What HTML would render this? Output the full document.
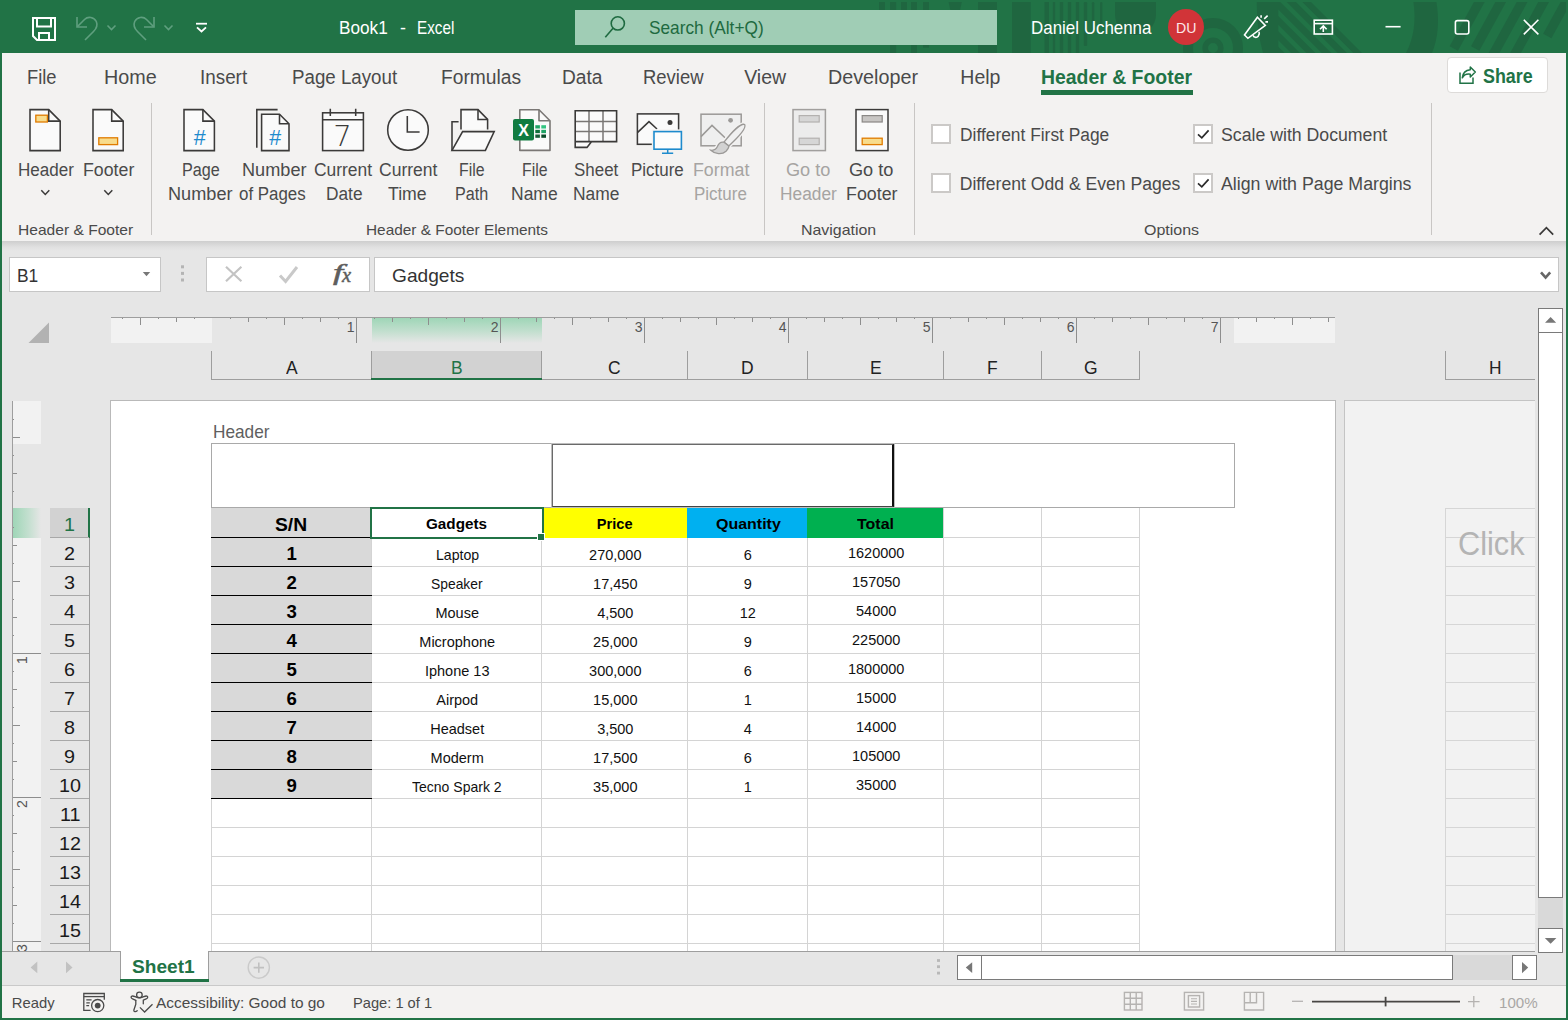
<!DOCTYPE html>
<html lang="en"><head><meta charset="utf-8"><title>Book1 - Excel</title>
<style>
html,body{margin:0;padding:0}
body{width:1568px;height:1020px;position:relative;overflow:hidden;background:#e6e6e6;font-family:"Liberation Sans",sans-serif;}
.a{position:absolute;display:block}
.t{position:absolute;white-space:nowrap;line-height:1;transform-origin:0 0;display:block}
</style></head>
<body>
<div class="a" style="left:0px;top:0px;width:1568px;height:53px;background:#217346;"></div>
<svg class="a" style="left:0;top:0" width="1568" height="53" viewBox="0 0 1568 53"><defs><clipPath id="cpA"><rect x="1278.3" y="2" width="120" height="51"/></clipPath><clipPath id="cpB"><rect x="1440" y="2" width="126" height="51"/></clipPath></defs><g fill="#1f6640"><rect x="879" y="2" width="6" height="40"/><rect x="890" y="2" width="6.2" height="51"/><rect x="901" y="2" width="6" height="40"/><rect x="911" y="2" width="6" height="51"/><rect x="923" y="2" width="6" height="45.6"/><path d="M948.6 2h13.2l-3 14h-7.2z"/><rect x="978" y="2" width="19" height="51"/><rect x="1012" y="2" width="18.7" height="51"/><rect x="1044.5" y="2" width="4.5" height="51" rx="0"/><rect x="1052.8" y="2" width="2.4" height="51" rx="0"/><rect x="1059.8" y="2" width="3.4" height="51" rx="0"/><rect x="1067.8" y="2" width="3.4" height="51" rx="0"/><rect x="1075.8" y="2" width="3.4" height="51" rx="0"/><rect x="1083.8" y="2" width="3.4" height="44" rx="1.2"/><rect x="1091.9" y="2" width="2.4" height="30" rx="1.2"/><rect x="1100" y="2" width="2.4" height="24" rx="1.2"/><path d="M1115 2h41v12.5a20.5 20.5 0 0 1-41 0z"/></g><circle cx="1213" cy="48" r="25" fill="none" stroke="#1f6640" stroke-width="10"/><circle cx="1213" cy="48" r="7.8" fill="none" stroke="#1f6640" stroke-width="5.6"/><path d="M1256.8 2H1311L1362 53H1263C1258.5 37 1256.6 20 1256.8 2Z" fill="#1f6640"/><g stroke="#217346" stroke-width="4.6" clip-path="url(#cpA)"><path d="M1293.1 -4L1357.1 60"/><path d="M1277.5 -4L1341.5 60"/><path d="M1261.6 -4L1325.6 60"/><path d="M1246.2 -4L1310.2 60"/><path d="M1230.8 -4L1294.8 60"/></g><path d="M1413.4 2H1436.4C1439.4 20 1438.4 38 1432 53H1406C1414 38 1416.2 20 1413.4 2Z" fill="#1f6640"/><g stroke="#1f6640" stroke-width="9.4" clip-path="url(#cpB)"><path d="M1482.6 -4L1453.8 48.4"/><path d="M1504.0 -4L1475.2 48.4"/><path d="M1525.4 -4L1490.2 60"/><path d="M1546.9 -4L1511.7 60"/><path d="M1569.3 -4L1547.3 36"/></g></svg>
<div class="a" style="left:575px;top:10px;width:422px;height:35px;background:#a0cdb5;"></div>
<div class="a" style="left:1168px;top:9px;width:36px;height:36px;background:#d13438;border-radius:50%;"></div>
<svg class="a" style="left:0;top:0" width="1568" height="53" viewBox="0 0 1568 53" fill="none" stroke-linecap="butt"><g stroke="#fff" stroke-width="2"><path d="M33 18H55V40H37L33 36Z"/><path d="M37 18V26.5H51V18"/><path d="M39 40V33H49V40"/></g><g stroke="#5f9f7f" stroke-width="1.6"><path d="M77 17V27H87"/><path d="M77.5 26.5L84.5 19.5C88 16 94 17 96.3 21.5C98 25.5 96.5 28.5 93.5 31.5L85 40"/><path d="M107.5 25.5L111.5 29.5L115.5 25.5"/><path d="M154 17V27H144"/><path d="M153.5 26.5L146.5 19.5C143 16 137 17 134.7 21.5C133 25.5 134.5 28.5 137.5 31.5L146 40"/><path d="M164.5 25.5L168.5 29.5L172.5 25.5"/></g><g stroke="#fff" stroke-width="1.8"><path d="M196 23.7H207"/><path d="M197 27.3L201.5 31.5L206 27.3"/></g><g stroke="#1e6a40" stroke-width="1.6"><circle cx="617.8" cy="23.4" r="6.6"/><path d="M613 28.3L605.3 37.3"/></g><g stroke="#fff" stroke-width="1.6" stroke-linejoin="miter"><path d="M1257.4 17.2L1265.3 25.5L1247.9 38.3L1244.5 35Z"/><path d="M1253 35.2C1253.6 37.6 1256.6 38 1258.2 36.2C1259.4 34.8 1259.6 33.2 1259 31.8"/><path d="M1261.1 15.2V17.8M1264.2 18.8L1267.6 15.6M1265.4 21.9H1268"/></g><g stroke="#fff" stroke-width="1.6"><rect x="1314.2" y="20.2" width="18.2" height="13.8"/><path d="M1314 23.6H1332.6"/><path d="M1323.3 32V26.3M1320 29.3L1323.3 26L1326.6 29.3"/></g><path d="M1385.5 26.7H1400.6" stroke="#fff" stroke-width="1.6"/><rect x="1455.4" y="20.6" width="13.4" height="13.4" rx="2" stroke="#fff" stroke-width="1.6"/><path d="M1523.8 19.8L1538.4 34.4M1538.4 19.8L1523.8 34.4" stroke="#fff" stroke-width="1.6"/></svg>
<span class="t" style="left:339.10px;top:19.00px;font-size:18.2px;color:#fff;transform:scaleX(0.9458);">Book1</span>
<span class="t" style="left:400.00px;top:19.00px;font-size:18.2px;color:#fff;transform:scaleX(0.9841);">-</span>
<span class="t" style="left:417.20px;top:19.00px;font-size:18.2px;color:#fff;transform:scaleX(0.8382);">Excel</span>
<span class="t" style="left:649.00px;top:19.00px;font-size:18.2px;color:#1e6a40;transform:scaleX(0.9491);">Search (Alt+Q)</span>
<span class="t" style="left:1030.70px;top:19.00px;font-size:18.2px;color:#fff;transform:scaleX(0.9307);">Daniel Uchenna</span>
<span class="t" style="left:1175.60px;top:21.00px;font-size:14px;color:#fde7e9;transform:scaleX(1.0084);">DU</span>
<div class="a" style="left:0px;top:53px;width:1568px;height:188px;background:#f3f2f1;"></div>
<span class="t" style="left:27.10px;top:68.00px;font-size:19.5px;color:#4a4a4a;transform:scaleX(0.9396);">File</span>
<span class="t" style="left:104.10px;top:68.00px;font-size:19.5px;color:#4a4a4a;transform:scaleX(1.0141);">Home</span>
<span class="t" style="left:200.30px;top:68.00px;font-size:19.5px;color:#4a4a4a;transform:scaleX(0.9662);">Insert</span>
<span class="t" style="left:292.30px;top:68.00px;font-size:19.5px;color:#4a4a4a;transform:scaleX(0.9599);">Page Layout</span>
<span class="t" style="left:441.10px;top:68.00px;font-size:19.5px;color:#4a4a4a;transform:scaleX(0.9851);">Formulas</span>
<span class="t" style="left:562.30px;top:68.00px;font-size:19.5px;color:#4a4a4a;transform:scaleX(0.9820);">Data</span>
<span class="t" style="left:643.10px;top:68.00px;font-size:19.5px;color:#4a4a4a;transform:scaleX(0.9459);">Review</span>
<span class="t" style="left:744.20px;top:68.00px;font-size:19.5px;color:#4a4a4a;">View</span>
<span class="t" style="left:828.10px;top:68.00px;font-size:19.5px;color:#4a4a4a;transform:scaleX(1.0121);">Developer</span>
<span class="t" style="left:960.30px;top:68.00px;font-size:19.5px;color:#4a4a4a;">Help</span>
<span class="t" style="left:1041.30px;top:68.00px;font-size:19.5px;color:#217346;font-weight:700;transform:scaleX(0.9953);">Header &amp; Footer</span>
<div class="a" style="left:1041px;top:90px;width:152px;height:5px;background:#217346;"></div>
<div class="a" style="left:1447px;top:57px;width:101px;height:36px;background:#fff;border:1px solid #dddbd9;border-radius:4px;box-sizing:border-box;"></div>
<svg class="a" style="left:1455px;top:62px" width="26" height="26" viewBox="1455 62 26 26" fill="none" stroke="#217346" stroke-width="1.5"><path d="M1460 72.5V83.3H1473V77.5"/><path d="M1470.3 67L1475.3 72L1470.3 77V74.2C1466.5 73.6 1463.8 75 1462.3 77.8C1462.8 73 1465.5 70.3 1470.3 69.8Z" stroke-linejoin="round"/></svg>
<span class="t" style="left:1483.30px;top:67.00px;font-size:19.5px;color:#217346;font-weight:700;transform:scaleX(0.9168);">Share</span>
<div class="a" style="left:151px;top:103px;width:1px;height:132px;background:#c8c6c4;"></div>
<div class="a" style="left:764px;top:103px;width:1px;height:132px;background:#c8c6c4;"></div>
<div class="a" style="left:914px;top:103px;width:1px;height:132px;background:#c8c6c4;"></div>
<div class="a" style="left:1431px;top:103px;width:1px;height:132px;background:#c8c6c4;"></div>
<div class="a" style="left:931px;top:124px;width:20px;height:20px;background:#fff;border:2px solid #cbc9c7;box-sizing:border-box;"></div>
<div class="a" style="left:931px;top:173px;width:20px;height:20px;background:#fff;border:2px solid #cbc9c7;box-sizing:border-box;"></div>
<div class="a" style="left:1193px;top:124px;width:20px;height:20px;background:#fff;border:2px solid #cbc9c7;box-sizing:border-box;"></div>
<div class="a" style="left:1193px;top:173px;width:20px;height:20px;background:#fff;border:2px solid #cbc9c7;box-sizing:border-box;"></div>
<svg class="a" style="left:0;top:100px" width="1568" height="141" viewBox="0 100 1568 141" fill="none" stroke-width="1.55"><path d="M30 109.6H48.7L60.2 121.1V150.6H30Z" fill="#fafafa" stroke="#3b3a39"/><path d="M48.7 109.6V121.1H60.2" stroke="#3b3a39"/><rect x="35.8" y="115.2" width="11.6" height="6.8" fill="#f8dc8c" stroke="#e07b00" stroke-width="1.3"/><path d="M93 109.6H111.7L123.2 121.1V150.6H93Z" fill="#fafafa" stroke="#3b3a39"/><path d="M111.7 109.6V121.1H123.2" stroke="#3b3a39"/><rect x="98.8" y="137.8" width="18.8" height="6.8" fill="#f8dc8c" stroke="#e07b00" stroke-width="1.3"/><g stroke="#3b3a39" stroke-width="1.5"><path d="M41.3 190.3L45.3 194.5L49.3 190.3"/><path d="M104.3 190.3L108.3 194.5L112.3 190.3"/></g><path d="M184 109.6H202.9L214.4 121.1V150.6H184Z" fill="#fafafa" stroke="#3b3a39"/><path d="M202.9 109.6V121.1H214.4" stroke="#3b3a39"/><text x="199.8" y="144.9" font-size="21.5" font-weight="400" fill="#1e8bcd" text-anchor="middle" stroke="none" font-family="Liberation Sans,sans-serif">#</text><path d="M256.8 147.8V109.6H277.6" stroke="#3b3a39"/><path d="M261.6 114.2H279.5L289 123.7V150.6H261.6Z" fill="#fafafa" stroke="#3b3a39"/><path d="M279.5 114.2V123.7H289" stroke="#3b3a39"/><text x="275.3" y="144.9" font-size="21.5" font-weight="400" fill="#1e8bcd" text-anchor="middle" stroke="none" font-family="Liberation Sans,sans-serif">#</text><rect x="322.6" y="112.8" width="40.8" height="37.8" fill="#fafafa" stroke="#3b3a39"/><path d="M322.6 119.7H363.4M330.3 108.8V116M355.7 108.8V116" stroke="#3b3a39"/><text x="342.5" y="146.3" font-size="29" fill="#3b3a39" text-anchor="middle" stroke="none" font-family="DejaVu Sans Light,DejaVu Sans,sans-serif" font-weight="200">7</text><circle cx="408" cy="130" r="20.3" fill="#fafafa" stroke="#3b3a39"/><path d="M407.3 116V132H419.6" stroke="#3b3a39"/><path d="M461 129.6V109.6H478L487.6 119.4V129.6" fill="#fafafa" stroke="#3b3a39"/><path d="M478 109.6V119.4H487.6" stroke="#3b3a39"/><path d="M458.6 121.8H452V150.4" stroke="#3b3a39"/><path d="M452 150.4L462.6 131.6H494.2L485.4 150.4Z" fill="#fafafa" stroke="#3b3a39"/><path d="M519.8 109.8H539L550 120.8V150.4H519.8Z" fill="#fafafa" stroke="#7a7775" stroke-width="1.6" stroke-linejoin="round"/><path d="M539 109.8V120.8H550" stroke="#7a7775" stroke-width="1.6" stroke-linejoin="round"/><rect x="513" y="119" width="21" height="21.5" rx="2" fill="#107c41"/><text x="523.5" y="135.6" font-size="16" font-weight="700" fill="#fff" text-anchor="middle" font-family="Liberation Sans,sans-serif">X</text><rect x="535.3" y="125.20" width="4.6" height="3.3" fill="#21a366"/><rect x="541.3" y="125.20" width="4.7" height="3.3" fill="#33c481"/><rect x="535.3" y="129.85" width="4.6" height="3.3" fill="#0e703b"/><rect x="541.3" y="129.85" width="4.7" height="3.3" fill="#21a366"/><rect x="535.3" y="134.50" width="4.6" height="3.3" fill="#185c37"/><rect x="541.3" y="134.50" width="4.7" height="3.3" fill="#0a4a28"/><path d="M575.2 110.8H616.6V141.6H591.6L587 147.4H575.2Z" fill="#fafafa"/><path d="M589 110.8V141.6M603 110.8V141.6M575.2 121.6H616.6M575.2 131.6H616.6" stroke="#7a7775" stroke-width="1.5"/><path d="M575.2 110.8H616.6V141.6H591.6L587 147.4H575.2ZM575.2 141.6H591.6" stroke="#3b3a39" stroke-width="1.6"/><rect x="637.4" y="113.9" width="41.2" height="30.4" fill="#fafafa" stroke="#3b3a39"/><path d="M637.4 132.6L649 121.6L657 129" stroke="#3b3a39"/><circle cx="670" cy="122.5" r="2.5" fill="#3b3a39"/><rect x="654" y="131.6" width="27.4" height="17.6" fill="none" stroke="#f3f2f1" stroke-width="4.4"/><rect x="654" y="131.6" width="27.4" height="17.6" fill="#fdfdfd" stroke="#1e8bcd" stroke-width="1.6"/><path d="M667.7 149.2V153.2M662 153.3H673.2" stroke="#1e8bcd" stroke-width="1.5"/><rect x="701" y="114.2" width="40.2" height="31.6" fill="#efefef" stroke="#9b9997" stroke-width="1.5"/><path d="M701 136.6L712 125.4L725 137.8" stroke="#9b9997" stroke-width="1.5"/><circle cx="730.6" cy="120.3" r="2.4" fill="#9b9997"/><path d="M744.7 124.5C741.5 123 733 130.5 724 142.2L728.8 145.9C738 137.5 746.5 128 744.7 124.5Z" stroke="#f3f2f1" stroke-width="4.2"/><path d="M724 142.2C720.4 141.4 718.4 144 717.4 146.6C716.2 149.4 713.8 150.6 710.8 150.2C715 154.2 722 155 726 151.2C728 149.2 729 147.6 728.8 145.9Z" stroke="#f3f2f1" stroke-width="4.2"/><path d="M744.7 124.5C741.5 123 733 130.5 724 142.2L728.8 145.9C738 137.5 746.5 128 744.7 124.5Z" fill="#f0f0f0" stroke="#9b9997" stroke-width="1.3"/><path d="M724 142.2C720.4 141.4 718.4 144 717.4 146.6C716.2 149.4 713.8 150.6 710.8 150.2C715 154.2 722 155 726 151.2C728 149.2 729 147.6 728.8 145.9Z" fill="#d2d2d2" stroke="#9b9997" stroke-width="1.3"/><rect x="793" y="109.6" width="32.4" height="41" fill="#ececec" stroke="#a19f9d" stroke-width="1.5"/><rect x="799.2" y="115.6" width="20" height="6.4" fill="#d6d6d6" stroke="#b3b1af" stroke-width="1.2"/><rect x="799.2" y="138.2" width="20" height="6.4" fill="#d6d6d6" stroke="#b3b1af" stroke-width="1.2"/><rect x="856" y="109.6" width="32" height="41" fill="#fafafa" stroke="#3b3a39" stroke-width="1.5"/><rect x="862.2" y="115.6" width="20" height="6.4" fill="#c8c6c4" stroke="#8a8886" stroke-width="1.2"/><rect x="862.2" y="138.2" width="20" height="6.4" fill="#f8dc8c" stroke="#e07b00" stroke-width="1.3"/><path d="M1198 134.4L1201.8 137.8L1208.6 130.4" stroke="#2b2b2b" stroke-width="1.7"/><path d="M1198 183.4L1201.8 186.8L1208.6 179.4" stroke="#2b2b2b" stroke-width="1.7"/><path d="M1539.6 234.6L1546.4 227.6L1553.2 234.6" stroke="#3b3a39" stroke-width="1.7"/></svg>
<span class="t" style="left:17.50px;top:162.00px;font-size:17.6px;color:#4a4a4a;transform:scaleX(0.9701);">Header</span>
<span class="t" style="left:83.30px;top:162.00px;font-size:17.6px;color:#4a4a4a;transform:scaleX(1.0086);">Footer</span>
<span class="t" style="left:181.50px;top:162.00px;font-size:17.6px;color:#4a4a4a;transform:scaleX(0.9198);">Page</span>
<span class="t" style="left:167.50px;top:186.00px;font-size:17.6px;color:#4a4a4a;transform:scaleX(1.0309);">Number</span>
<span class="t" style="left:241.50px;top:162.00px;font-size:17.6px;color:#4a4a4a;transform:scaleX(1.0309);">Number</span>
<span class="t" style="left:239.30px;top:186.00px;font-size:17.6px;color:#4a4a4a;transform:scaleX(0.9607);">of Pages</span>
<span class="t" style="left:313.90px;top:162.00px;font-size:17.6px;color:#4a4a4a;transform:scaleX(0.9898);">Current</span>
<span class="t" style="left:325.50px;top:186.00px;font-size:17.6px;color:#4a4a4a;transform:scaleX(0.9829);">Date</span>
<span class="t" style="left:378.60px;top:162.00px;font-size:17.6px;color:#4a4a4a;transform:scaleX(0.9950);">Current</span>
<span class="t" style="left:388.30px;top:186.00px;font-size:17.6px;color:#4a4a4a;transform:scaleX(1.0063);">Time</span>
<span class="t" style="left:459.30px;top:162.00px;font-size:17.6px;color:#4a4a4a;transform:scaleX(0.9034);">File</span>
<span class="t" style="left:455.30px;top:186.00px;font-size:17.6px;color:#4a4a4a;transform:scaleX(0.9179);">Path</span>
<span class="t" style="left:521.50px;top:162.00px;font-size:17.6px;color:#4a4a4a;transform:scaleX(0.8999);">File</span>
<span class="t" style="left:510.50px;top:186.00px;font-size:17.6px;color:#4a4a4a;transform:scaleX(0.9938);">Name</span>
<span class="t" style="left:573.70px;top:162.00px;font-size:17.6px;color:#4a4a4a;transform:scaleX(0.9625);">Sheet</span>
<span class="t" style="left:572.50px;top:186.00px;font-size:17.6px;color:#4a4a4a;transform:scaleX(0.9895);">Name</span>
<span class="t" style="left:631.30px;top:162.00px;font-size:17.6px;color:#4a4a4a;transform:scaleX(0.9628);">Picture</span>
<span class="t" style="left:692.50px;top:162.00px;font-size:17.6px;color:#a6a4a2;transform:scaleX(1.0107);">Format</span>
<span class="t" style="left:694.20px;top:186.00px;font-size:17.6px;color:#a6a4a2;transform:scaleX(0.9646);">Picture</span>
<span class="t" style="left:785.60px;top:162.00px;font-size:17.6px;color:#a6a4a2;transform:scaleX(1.0318);">Go to</span>
<span class="t" style="left:780.20px;top:186.00px;font-size:17.6px;color:#a6a4a2;transform:scaleX(0.9839);">Header</span>
<span class="t" style="left:848.60px;top:162.00px;font-size:17.6px;color:#4a4a4a;transform:scaleX(1.0318);">Go to</span>
<span class="t" style="left:846.30px;top:186.00px;font-size:17.6px;color:#4a4a4a;transform:scaleX(1.0125);">Footer</span>
<span class="t" style="left:17.80px;top:223.00px;font-size:14.8px;color:#4a4a4a;transform:scaleX(1.0526);">Header &amp; Footer</span>
<span class="t" style="left:366.30px;top:223.00px;font-size:14.8px;color:#4a4a4a;transform:scaleX(1.0392);">Header &amp; Footer Elements</span>
<span class="t" style="left:801.30px;top:223.00px;font-size:14.8px;color:#4a4a4a;transform:scaleX(1.0754);">Navigation</span>
<span class="t" style="left:1144.30px;top:223.00px;font-size:14.8px;color:#4a4a4a;transform:scaleX(1.0807);">Options</span>
<span class="t" style="left:959.70px;top:127.00px;font-size:17.6px;color:#4a4a4a;transform:scaleX(0.9870);">Different First Page</span>
<span class="t" style="left:959.70px;top:176.00px;font-size:17.6px;color:#4a4a4a;">Different Odd &amp; Even Pages</span>
<span class="t" style="left:1220.70px;top:127.00px;font-size:17.6px;color:#4a4a4a;transform:scaleX(1.0057);">Scale with Document</span>
<span class="t" style="left:1220.70px;top:176.00px;font-size:17.6px;color:#4a4a4a;transform:scaleX(1.0093);">Align with Page Margins</span>
<div class="a" style="left:0px;top:241px;width:1568px;height:10px;background:linear-gradient(#cecece,#e0e0e0 60%,#e6e6e6);"></div>
<div class="a" style="left:9px;top:257px;width:152px;height:35px;background:#fff;border:1px solid #c6c6c6;box-sizing:border-box;"></div>
<div class="a" style="left:206px;top:257px;width:164px;height:35px;background:#fff;border:1px solid #c6c6c6;box-sizing:border-box;"></div>
<div class="a" style="left:374px;top:257px;width:1185px;height:35px;background:#fff;border:1px solid #c6c6c6;box-sizing:border-box;"></div>
<span class="t" style="left:16.70px;top:266.00px;font-size:19px;color:#333;transform:scaleX(0.9151);">B1</span>
<span class="t" style="left:391.50px;top:266.00px;font-size:19px;color:#333;transform:scaleX(1.0081);">Gadgets</span>
<span class="t" style="left:332.60px;top:261.00px;font-size:23px;color:#5e5e5e;font-family:'Liberation Serif',serif;font-style:italic;transform:scaleX(1.5850);-webkit-text-stroke:0.5px #5e5e5e;">f</span>
<span class="t" style="left:341.81px;top:265.00px;font-size:21px;color:#5e5e5e;font-family:'Liberation Serif',serif;font-style:italic;transform:scaleX(0.9731);-webkit-text-stroke:0.5px #5e5e5e;">x</span>
<svg class="a" style="left:0;top:255px" width="1568" height="40" viewBox="0 255 1568 40" fill="none"><path d="M142.8 272H150.2L146.5 276.2Z" fill="#777"/><rect x="181" y="265.3" width="3" height="3" fill="#b4b4b4"/><rect x="181" y="271.9" width="3" height="3" fill="#b4b4b4"/><rect x="181" y="278.5" width="3" height="3" fill="#b4b4b4"/><path d="M226 266.8L241.4 281.2M241.4 266.8L226 281.2" stroke="#c3c3c3" stroke-width="2.2"/><path d="M280 275.4L285.6 281.4L297 267" stroke="#c9c9c9" stroke-width="3"/><path d="M1541 272.3L1545.6 277.6L1550.2 272.3" stroke="#666" stroke-width="2.6"/></svg>
<div class="a" style="left:110px;top:400px;width:1226px;height:552px;background:#fff;border:1px solid #b9b9b9;border-bottom:none;box-sizing:border-box;"></div>
<div class="a" style="left:1344px;top:400px;width:191px;height:552px;background:#f2f2f2;border:1px solid #c4c4c4;border-right:none;border-bottom:none;box-sizing:border-box;"></div>
<span class="t" style="left:213.30px;top:424.00px;font-size:17.8px;color:#5f5f5f;transform:scaleX(0.9694);">Header</span>
<div class="a" style="left:211px;top:443px;width:1024px;height:65px;background:#fff;border:1px solid #a9a9a9;box-sizing:border-box;"></div>
<div class="a" style="left:551px;top:443px;width:344px;height:65px;background:#fff;border:1px solid #bdbdbd;box-sizing:border-box;"></div>
<div class="a" style="left:552px;top:444px;width:342px;height:63px;background:#fff;border-top:1px solid #6a6a6a;border-left:1.5px solid #6a6a6a;border-right:2px solid #111;border-bottom:1.5px solid #444;box-sizing:border-box;"></div>
<div class="a" style="left:211px;top:508px;width:161px;height:290px;background:#d9d9d9;"></div>
<div class="a" style="left:542px;top:508px;width:145px;height:30px;background:#ffff00;"></div>
<div class="a" style="left:687px;top:508px;width:120px;height:30px;background:#00b0f0;"></div>
<div class="a" style="left:807px;top:508px;width:137px;height:30px;background:#00b050;"></div>
<div class="a" style="left:211px;top:798px;width:1px;height:153px;background:#d4d4d4;"></div>
<div class="a" style="left:371px;top:538px;width:1px;height:413px;background:#d4d4d4;"></div>
<div class="a" style="left:541px;top:538px;width:1px;height:413px;background:#d4d4d4;"></div>
<div class="a" style="left:687px;top:538px;width:1px;height:413px;background:#d4d4d4;"></div>
<div class="a" style="left:807px;top:538px;width:1px;height:413px;background:#d4d4d4;"></div>
<div class="a" style="left:943px;top:508px;width:1px;height:443px;background:#d4d4d4;"></div>
<div class="a" style="left:1041px;top:508px;width:1px;height:443px;background:#d4d4d4;"></div>
<div class="a" style="left:1139px;top:508px;width:1px;height:443px;background:#d4d4d4;"></div>
<div class="a" style="left:944px;top:537px;width:196px;height:1px;background:#d4d4d4;"></div>
<div class="a" style="left:372px;top:566px;width:768px;height:1px;background:#d4d4d4;"></div>
<div class="a" style="left:372px;top:595px;width:768px;height:1px;background:#d4d4d4;"></div>
<div class="a" style="left:372px;top:624px;width:768px;height:1px;background:#d4d4d4;"></div>
<div class="a" style="left:372px;top:653px;width:768px;height:1px;background:#d4d4d4;"></div>
<div class="a" style="left:372px;top:682px;width:768px;height:1px;background:#d4d4d4;"></div>
<div class="a" style="left:372px;top:711px;width:768px;height:1px;background:#d4d4d4;"></div>
<div class="a" style="left:372px;top:740px;width:768px;height:1px;background:#d4d4d4;"></div>
<div class="a" style="left:372px;top:769px;width:768px;height:1px;background:#d4d4d4;"></div>
<div class="a" style="left:372px;top:798px;width:768px;height:1px;background:#d4d4d4;"></div>
<div class="a" style="left:211px;top:827px;width:929px;height:1px;background:#d4d4d4;"></div>
<div class="a" style="left:211px;top:856px;width:929px;height:1px;background:#d4d4d4;"></div>
<div class="a" style="left:211px;top:885px;width:929px;height:1px;background:#d4d4d4;"></div>
<div class="a" style="left:211px;top:914px;width:929px;height:1px;background:#d4d4d4;"></div>
<div class="a" style="left:211px;top:943px;width:929px;height:1px;background:#d4d4d4;"></div>
<div class="a" style="left:211px;top:537px;width:161px;height:1px;background:#000;"></div>
<div class="a" style="left:211px;top:566px;width:161px;height:1px;background:#000;"></div>
<div class="a" style="left:211px;top:595px;width:161px;height:1px;background:#000;"></div>
<div class="a" style="left:211px;top:624px;width:161px;height:1px;background:#000;"></div>
<div class="a" style="left:211px;top:653px;width:161px;height:1px;background:#000;"></div>
<div class="a" style="left:211px;top:682px;width:161px;height:1px;background:#000;"></div>
<div class="a" style="left:211px;top:711px;width:161px;height:1px;background:#000;"></div>
<div class="a" style="left:211px;top:740px;width:161px;height:1px;background:#000;"></div>
<div class="a" style="left:211px;top:769px;width:161px;height:1px;background:#000;"></div>
<div class="a" style="left:211px;top:798px;width:161px;height:1px;background:#000;"></div>
<div class="a" style="left:370px;top:507px;width:174px;height:32px;border:2px solid #217346;box-sizing:border-box;background:#fff;"></div>
<div class="a" style="left:537px;top:533px;width:8px;height:8px;background:#fff;"></div>
<div class="a" style="left:538px;top:534px;width:6px;height:6px;background:#217346;"></div>
<div class="a" style="left:1445px;top:508px;width:1px;height:443px;background:#d6d6d6;"></div>
<div class="a" style="left:1445px;top:508px;width:90px;height:1px;background:#d6d6d6;"></div>
<div class="a" style="left:1445px;top:537px;width:90px;height:1px;background:#d6d6d6;"></div>
<div class="a" style="left:1445px;top:566px;width:90px;height:1px;background:#d6d6d6;"></div>
<div class="a" style="left:1445px;top:595px;width:90px;height:1px;background:#d6d6d6;"></div>
<div class="a" style="left:1445px;top:624px;width:90px;height:1px;background:#d6d6d6;"></div>
<div class="a" style="left:1445px;top:653px;width:90px;height:1px;background:#d6d6d6;"></div>
<div class="a" style="left:1445px;top:682px;width:90px;height:1px;background:#d6d6d6;"></div>
<div class="a" style="left:1445px;top:711px;width:90px;height:1px;background:#d6d6d6;"></div>
<div class="a" style="left:1445px;top:740px;width:90px;height:1px;background:#d6d6d6;"></div>
<div class="a" style="left:1445px;top:769px;width:90px;height:1px;background:#d6d6d6;"></div>
<div class="a" style="left:1445px;top:798px;width:90px;height:1px;background:#d6d6d6;"></div>
<div class="a" style="left:1445px;top:827px;width:90px;height:1px;background:#d6d6d6;"></div>
<div class="a" style="left:1445px;top:856px;width:90px;height:1px;background:#d6d6d6;"></div>
<div class="a" style="left:1445px;top:885px;width:90px;height:1px;background:#d6d6d6;"></div>
<div class="a" style="left:1445px;top:914px;width:90px;height:1px;background:#d6d6d6;"></div>
<div class="a" style="left:1445px;top:943px;width:90px;height:1px;background:#d6d6d6;"></div>
<span class="t" style="left:1458.10px;top:527.00px;font-size:33px;color:#b4b4b4;transform:scaleX(0.9314);">Click</span>
<span class="t" style="left:275.35px;top:517.00px;font-size:17.6px;color:#000;font-weight:700;transform:scaleX(1.0954);">S/N</span>
<span class="t" style="left:426.00px;top:517.00px;font-size:14.6px;color:#000;font-weight:700;transform:scaleX(1.0445);">Gadgets</span>
<span class="t" style="left:596.80px;top:517.00px;font-size:14.6px;color:#000;font-weight:700;">Price</span>
<span class="t" style="left:715.50px;top:517.00px;font-size:14.6px;color:#000;font-weight:700;transform:scaleX(1.0945);">Quantity</span>
<span class="t" style="left:857.40px;top:517.00px;font-size:14.6px;color:#000;font-weight:700;transform:scaleX(1.0947);">Total</span>
<span class="t" style="left:286.44px;top:545.00px;font-size:18.6px;color:#000;font-weight:700;">1</span>
<span class="t" style="left:435.60px;top:548.00px;font-size:14.5px;color:#111;transform:scaleX(0.9736);">Laptop</span>
<span class="t" style="left:589.09px;top:548.00px;font-size:14.5px;color:#111;">270,000</span>
<span class="t" style="left:743.78px;top:548.00px;font-size:14.5px;color:#111;">6</span>
<span class="t" style="left:847.96px;top:546.00px;font-size:14.5px;color:#111;">1620000</span>
<span class="t" style="left:286.44px;top:574.00px;font-size:18.6px;color:#000;font-weight:700;">2</span>
<span class="t" style="left:431.40px;top:577.00px;font-size:14.5px;color:#111;transform:scaleX(0.9553);">Speaker</span>
<span class="t" style="left:593.12px;top:577.00px;font-size:14.5px;color:#111;">17,450</span>
<span class="t" style="left:743.78px;top:577.00px;font-size:14.5px;color:#111;">9</span>
<span class="t" style="left:852.02px;top:575.00px;font-size:14.5px;color:#111;">157050</span>
<span class="t" style="left:286.44px;top:603.00px;font-size:18.6px;color:#000;font-weight:700;">3</span>
<span class="t" style="left:435.45px;top:606.00px;font-size:14.5px;color:#111;">Mouse</span>
<span class="t" style="left:597.14px;top:606.00px;font-size:14.5px;color:#111;">4,500</span>
<span class="t" style="left:739.75px;top:606.00px;font-size:14.5px;color:#111;">12</span>
<span class="t" style="left:856.05px;top:604.00px;font-size:14.5px;color:#111;">54000</span>
<span class="t" style="left:286.44px;top:632.00px;font-size:18.6px;color:#000;font-weight:700;">4</span>
<span class="t" style="left:419.32px;top:635.00px;font-size:14.5px;color:#111;">Microphone</span>
<span class="t" style="left:593.12px;top:635.00px;font-size:14.5px;color:#111;">25,000</span>
<span class="t" style="left:743.78px;top:635.00px;font-size:14.5px;color:#111;">9</span>
<span class="t" style="left:852.02px;top:633.00px;font-size:14.5px;color:#111;">225000</span>
<span class="t" style="left:286.44px;top:661.00px;font-size:18.6px;color:#000;font-weight:700;">5</span>
<span class="t" style="left:424.94px;top:664.00px;font-size:14.5px;color:#111;">Iphone 13</span>
<span class="t" style="left:589.09px;top:664.00px;font-size:14.5px;color:#111;">300,000</span>
<span class="t" style="left:743.78px;top:664.00px;font-size:14.5px;color:#111;">6</span>
<span class="t" style="left:847.96px;top:662.00px;font-size:14.5px;color:#111;">1800000</span>
<span class="t" style="left:286.44px;top:690.00px;font-size:18.6px;color:#000;font-weight:700;">6</span>
<span class="t" style="left:436.25px;top:693.00px;font-size:14.5px;color:#111;">Airpod</span>
<span class="t" style="left:593.12px;top:693.00px;font-size:14.5px;color:#111;">15,000</span>
<span class="t" style="left:743.78px;top:693.00px;font-size:14.5px;color:#111;">1</span>
<span class="t" style="left:856.05px;top:691.00px;font-size:14.5px;color:#111;">15000</span>
<span class="t" style="left:286.44px;top:719.00px;font-size:18.6px;color:#000;font-weight:700;">7</span>
<span class="t" style="left:430.19px;top:722.00px;font-size:14.5px;color:#111;">Headset</span>
<span class="t" style="left:597.14px;top:722.00px;font-size:14.5px;color:#111;">3,500</span>
<span class="t" style="left:743.78px;top:722.00px;font-size:14.5px;color:#111;">4</span>
<span class="t" style="left:856.05px;top:720.00px;font-size:14.5px;color:#111;">14000</span>
<span class="t" style="left:286.44px;top:748.00px;font-size:18.6px;color:#000;font-weight:700;">8</span>
<span class="t" style="left:430.59px;top:751.00px;font-size:14.5px;color:#111;">Moderm</span>
<span class="t" style="left:593.12px;top:751.00px;font-size:14.5px;color:#111;">17,500</span>
<span class="t" style="left:743.78px;top:751.00px;font-size:14.5px;color:#111;">6</span>
<span class="t" style="left:852.02px;top:749.00px;font-size:14.5px;color:#111;">105000</span>
<span class="t" style="left:286.44px;top:777.00px;font-size:18.6px;color:#000;font-weight:700;">9</span>
<span class="t" style="left:412.40px;top:780.00px;font-size:14.5px;color:#111;transform:scaleX(0.9663);">Tecno Spark 2</span>
<span class="t" style="left:593.12px;top:780.00px;font-size:14.5px;color:#111;">35,000</span>
<span class="t" style="left:743.78px;top:780.00px;font-size:14.5px;color:#111;">1</span>
<span class="t" style="left:856.05px;top:778.00px;font-size:14.5px;color:#111;">35000</span>
<div class="a" style="left:111px;top:318px;width:101px;height:25px;background:#f2f2f2;"></div>
<div class="a" style="left:1234px;top:318px;width:101px;height:25px;background:#f2f2f2;"></div>
<div class="a" style="left:372px;top:318px;width:170px;height:25px;background:linear-gradient(#9fd6b7,#c3dfcf 55%,#e6e6e6);"></div>
<div class="a" style="left:111px;top:317px;width:1224px;height:1px;background:#9e9e9e;"></div>
<svg class="a" style="left:0;top:300px" width="1568" height="90" viewBox="0 300 1568 90" fill="none" shape-rendering="crispEdges"><path d="M122.5 318V319.0M140.5 318V325.0M158.5 318V319.0M176.5 318V322.0M194.5 318V319.0M230.5 318V319.0M248.5 318V322.0M266.5 318V319.0M284.5 318V325.0M302.5 318V319.0M320.5 318V322.0M338.5 318V319.0M356.5 318V343.0M374.5 318V319.0M392.5 318V322.0M410.5 318V319.0M428.5 318V325.0M446.5 318V319.0M464.5 318V322.0M482.5 318V319.0M500.5 318V343.0M518.5 318V319.0M536.5 318V322.0M554.5 318V319.0M572.5 318V325.0M590.5 318V319.0M608.5 318V322.0M626.5 318V319.0M644.5 318V343.0M662.5 318V319.0M680.5 318V322.0M698.5 318V319.0M716.5 318V325.0M734.5 318V319.0M752.5 318V322.0M770.5 318V319.0M788.5 318V343.0M806.5 318V319.0M824.5 318V322.0M842.5 318V319.0M860.5 318V325.0M878.5 318V319.0M896.5 318V322.0M914.5 318V319.0M932.5 318V343.0M950.5 318V319.0M968.5 318V322.0M986.5 318V319.0M1004.5 318V325.0M1022.5 318V319.0M1040.5 318V322.0M1058.5 318V319.0M1076.5 318V343.0M1094.5 318V319.0M1112.5 318V322.0M1130.5 318V319.0M1148.5 318V325.0M1166.5 318V319.0M1184.5 318V322.0M1202.5 318V319.0M1220.5 318V343.0M1238.5 318V319.0M1256.5 318V322.0M1274.5 318V319.0M1292.5 318V325.0M1310.5 318V319.0M1328.5 318V322.0" stroke="#8e8e8e" stroke-width="1"/><path d="M49 322.5V343H28.5Z" fill="#b2b2b2" shape-rendering="auto"/></svg>
<span class="t" style="left:346.63px;top:320.00px;font-size:14px;color:#555;">1</span>
<span class="t" style="left:490.63px;top:320.00px;font-size:14px;color:#555;">2</span>
<span class="t" style="left:634.63px;top:320.00px;font-size:14px;color:#555;">3</span>
<span class="t" style="left:778.63px;top:320.00px;font-size:14px;color:#555;">4</span>
<span class="t" style="left:922.63px;top:320.00px;font-size:14px;color:#555;">5</span>
<span class="t" style="left:1066.63px;top:320.00px;font-size:14px;color:#555;">6</span>
<span class="t" style="left:1210.63px;top:320.00px;font-size:14px;color:#555;">7</span>
<div class="a" style="left:372px;top:351px;width:170px;height:28px;background:#d2d2d2;"></div>
<div class="a" style="left:211px;top:351px;width:1px;height:29px;background:#9e9e9e;"></div>
<div class="a" style="left:371px;top:351px;width:1px;height:29px;background:#9e9e9e;"></div>
<div class="a" style="left:541px;top:351px;width:1px;height:29px;background:#9e9e9e;"></div>
<div class="a" style="left:687px;top:351px;width:1px;height:29px;background:#9e9e9e;"></div>
<div class="a" style="left:807px;top:351px;width:1px;height:29px;background:#9e9e9e;"></div>
<div class="a" style="left:943px;top:351px;width:1px;height:29px;background:#9e9e9e;"></div>
<div class="a" style="left:1041px;top:351px;width:1px;height:29px;background:#9e9e9e;"></div>
<div class="a" style="left:1139px;top:351px;width:1px;height:29px;background:#9e9e9e;"></div>
<div class="a" style="left:211px;top:379px;width:160px;height:1px;background:#9e9e9e;"></div>
<div class="a" style="left:542px;top:379px;width:598px;height:1px;background:#9e9e9e;"></div>
<div class="a" style="left:1445px;top:351px;width:1px;height:29px;background:#9e9e9e;"></div>
<div class="a" style="left:1445px;top:379px;width:90px;height:1px;background:#9e9e9e;"></div>
<div class="a" style="left:371px;top:378px;width:171px;height:2px;background:#217346;"></div>
<span class="t" style="left:285.64px;top:359.00px;font-size:18.8px;color:#222;transform:scaleX(0.9300);">A</span>
<span class="t" style="left:450.69px;top:359.00px;font-size:18.8px;color:#217346;transform:scaleX(0.9300);">B</span>
<span class="t" style="left:608.21px;top:359.00px;font-size:18.8px;color:#222;transform:scaleX(0.9300);">C</span>
<span class="t" style="left:741.21px;top:359.00px;font-size:18.8px;color:#222;transform:scaleX(0.9300);">D</span>
<span class="t" style="left:869.69px;top:359.00px;font-size:18.8px;color:#222;transform:scaleX(0.9300);">E</span>
<span class="t" style="left:987.17px;top:359.00px;font-size:18.8px;color:#222;transform:scaleX(0.9300);">F</span>
<span class="t" style="left:1083.68px;top:359.00px;font-size:18.8px;color:#222;transform:scaleX(0.9300);">G</span>
<span class="t" style="left:1488.70px;top:359.00px;font-size:18.8px;color:#222;transform:scaleX(0.9235);">H</span>
<div class="a" style="left:13px;top:401px;width:28px;height:43px;background:#f2f2f2;"></div>
<div class="a" style="left:13px;top:538px;width:28px;height:413px;background:#f2f2f2;"></div>
<div class="a" style="left:13px;top:508px;width:28px;height:30px;background:linear-gradient(90deg,#9fd6b7,#c3dfcf 55%,#e6e6e6);"></div>
<div class="a" style="left:12px;top:401px;width:1px;height:550px;background:#9e9e9e;"></div>
<svg class="a" style="left:0;top:395px" width="60" height="557" viewBox="0 395 60 557" fill="none" shape-rendering="crispEdges"><path d="M13 419.5H14M13 437.5H20M13 455.5H14M13 473.5H17M13 491.5H14M13 527.5H14M13 545.5H17M13 563.5H14M13 581.5H20M13 599.5H14M13 617.5H17M13 635.5H14M13 653.5H41M13 671.5H14M13 689.5H17M13 707.5H14M13 725.5H20M13 743.5H14M13 761.5H17M13 779.5H14M13 797.5H41M13 815.5H14M13 833.5H17M13 851.5H14M13 869.5H20M13 887.5H14M13 905.5H17M13 923.5H14M13 941.5H41" stroke="#8e8e8e" stroke-width="1"/></svg>
<span class="t" style="left:15.35px;top:663.77px;font-size:14px;color:#555;transform:rotate(-90deg);">1</span>
<span class="t" style="left:15.35px;top:807.77px;font-size:14px;color:#555;transform:rotate(-90deg);">2</span>
<span class="t" style="left:15.35px;top:951.77px;font-size:14px;color:#555;transform:rotate(-90deg);">3</span>
<div class="a" style="left:50px;top:508px;width:38px;height:29px;background:#d2d2d2;"></div>
<div class="a" style="left:89px;top:508px;width:1px;height:443px;background:#9e9e9e;"></div>
<div class="a" style="left:88px;top:508px;width:2px;height:30px;background:#217346;"></div>
<div class="a" style="left:50px;top:537px;width:39px;height:1px;background:#a8a8a8;"></div>
<div class="a" style="left:50px;top:566px;width:39px;height:1px;background:#a8a8a8;"></div>
<div class="a" style="left:50px;top:595px;width:39px;height:1px;background:#a8a8a8;"></div>
<div class="a" style="left:50px;top:624px;width:39px;height:1px;background:#a8a8a8;"></div>
<div class="a" style="left:50px;top:653px;width:39px;height:1px;background:#a8a8a8;"></div>
<div class="a" style="left:50px;top:682px;width:39px;height:1px;background:#a8a8a8;"></div>
<div class="a" style="left:50px;top:711px;width:39px;height:1px;background:#a8a8a8;"></div>
<div class="a" style="left:50px;top:740px;width:39px;height:1px;background:#a8a8a8;"></div>
<div class="a" style="left:50px;top:769px;width:39px;height:1px;background:#a8a8a8;"></div>
<div class="a" style="left:50px;top:798px;width:39px;height:1px;background:#a8a8a8;"></div>
<div class="a" style="left:50px;top:827px;width:39px;height:1px;background:#a8a8a8;"></div>
<div class="a" style="left:50px;top:856px;width:39px;height:1px;background:#a8a8a8;"></div>
<div class="a" style="left:50px;top:885px;width:39px;height:1px;background:#a8a8a8;"></div>
<div class="a" style="left:50px;top:914px;width:39px;height:1px;background:#a8a8a8;"></div>
<div class="a" style="left:50px;top:943px;width:39px;height:1px;background:#a8a8a8;"></div>
<span class="t" style="left:64.32px;top:515.00px;font-size:19px;color:#217346;transform:scaleX(1.0400);">1</span>
<span class="t" style="left:64.32px;top:544.00px;font-size:19px;color:#1a1a1a;transform:scaleX(1.0400);">2</span>
<span class="t" style="left:64.32px;top:573.00px;font-size:19px;color:#1a1a1a;transform:scaleX(1.0400);">3</span>
<span class="t" style="left:64.32px;top:602.00px;font-size:19px;color:#1a1a1a;transform:scaleX(1.0400);">4</span>
<span class="t" style="left:64.32px;top:631.00px;font-size:19px;color:#1a1a1a;transform:scaleX(1.0400);">5</span>
<span class="t" style="left:64.32px;top:660.00px;font-size:19px;color:#1a1a1a;transform:scaleX(1.0400);">6</span>
<span class="t" style="left:64.32px;top:689.00px;font-size:19px;color:#1a1a1a;transform:scaleX(1.0400);">7</span>
<span class="t" style="left:64.32px;top:718.00px;font-size:19px;color:#1a1a1a;transform:scaleX(1.0400);">8</span>
<span class="t" style="left:64.32px;top:747.00px;font-size:19px;color:#1a1a1a;transform:scaleX(1.0400);">9</span>
<span class="t" style="left:58.83px;top:776.00px;font-size:19px;color:#1a1a1a;transform:scaleX(1.0400);">10</span>
<span class="t" style="left:59.52px;top:805.00px;font-size:19px;color:#1a1a1a;transform:scaleX(1.0400);">11</span>
<span class="t" style="left:58.83px;top:834.00px;font-size:19px;color:#1a1a1a;transform:scaleX(1.0400);">12</span>
<span class="t" style="left:58.83px;top:863.00px;font-size:19px;color:#1a1a1a;transform:scaleX(1.0400);">13</span>
<span class="t" style="left:58.83px;top:892.00px;font-size:19px;color:#1a1a1a;transform:scaleX(1.0400);">14</span>
<span class="t" style="left:58.83px;top:921.00px;font-size:19px;color:#1a1a1a;transform:scaleX(1.0400);">15</span>
<div class="a" style="left:0px;top:951px;width:1568px;height:35px;background:#e6e6e6;"></div>
<div class="a" style="left:2px;top:951px;width:1533px;height:1px;background:#9e9e9e;"></div>
<div class="a" style="left:1535px;top:296px;width:33px;height:690px;background:#e6e6e6;"></div>
<div class="a" style="left:1538px;top:308px;width:25px;height:25px;background:#fff;border:1px solid #7a7a7a;box-sizing:border-box;"></div>
<div class="a" style="left:1538px;top:332px;width:25px;height:566px;background:#fff;border:1px solid #7a7a7a;box-sizing:border-box;"></div>
<div class="a" style="left:1538px;top:898px;width:25px;height:30px;background:#d9d9d9;"></div>
<div class="a" style="left:1538px;top:928px;width:25px;height:25px;background:#fff;border:1px solid #7a7a7a;box-sizing:border-box;"></div>
<div class="a" style="left:957px;top:955px;width:25px;height:25px;background:#fff;border:1px solid #7a7a7a;box-sizing:border-box;"></div>
<div class="a" style="left:981px;top:955px;width:472px;height:25px;background:#fff;border:1px solid #7a7a7a;box-sizing:border-box;"></div>
<div class="a" style="left:1453px;top:955px;width:59px;height:25px;background:#d9d9d9;"></div>
<div class="a" style="left:1512px;top:955px;width:25px;height:25px;background:#fff;border:1px solid #7a7a7a;box-sizing:border-box;"></div>
<div class="a" style="left:120px;top:951px;width:89px;height:31px;background:#fff;border-left:1px solid #9e9e9e;border-right:1px solid #9e9e9e;box-sizing:border-box;"></div>
<div class="a" style="left:120px;top:979px;width:89px;height:2.5px;background:#217346;"></div>
<span class="t" style="left:132.10px;top:957.00px;font-size:19px;color:#217346;font-weight:700;transform:scaleX(1.0061);">Sheet1</span>
<div class="a" style="left:0px;top:985px;width:1568px;height:35px;background:#f3f2f1;"></div>
<div class="a" style="left:0px;top:985px;width:1568px;height:1px;background:#c9c9c9;"></div>
<svg class="a" style="left:0;top:0" width="1568" height="1020" viewBox="0 0 1568 1020" fill="none"><path d="M1545 322.8L1550.6 317L1556.2 322.8Z" fill="#777"/><path d="M1544.8 938L1556.4 938L1550.6 943.8Z" fill="#777"/><path d="M972.2 962.2V973L965.8 967.6Z" fill="#777"/><path d="M1522 962V973.2L1528.2 967.6Z" fill="#777"/><path d="M37.3 961.6V973.2L30.6 967.4Z" fill="#c2c2c2"/><path d="M66 961.6V973.2L72.5 967.4Z" fill="#c2c2c2"/><circle cx="258.8" cy="967.6" r="10.6" stroke="#cacaca" stroke-width="1.4"/><path d="M253.6 967.6H264M258.8 962.4V972.8" stroke="#c0c0c0" stroke-width="1.6"/><rect x="937" y="959.1" width="3" height="2.8" fill="#b8b8b8"/><rect x="937" y="965.3000000000001" width="3" height="2.8" fill="#b8b8b8"/><rect x="937" y="971.7" width="3" height="2.8" fill="#b8b8b8"/><g stroke="#4a4a4a" stroke-width="1.3"><path d="M90.6 1010.4H83.8V993.5H104.3V999.8"/><path d="M83.8 996.6H104.3"/><path d="M86.3 999.9H91.6M86.3 1002.8H89.8M86.3 1005.7H89.1" stroke-width="1.2"/><circle cx="97.7" cy="1005.6" r="6.1"/><circle cx="97.7" cy="1005.6" r="2.9" fill="#4a4a4a" stroke="none"/></g><g stroke="#4a4a4a" stroke-width="1.3" stroke-linecap="round" stroke-linejoin="round"><circle cx="139.4" cy="994.9" r="2.8"/><path d="M135.8 1000.3V1004.2L133.8 1010.2C133.6 1011.7 135.5 1012.3 137.2 1010.8"/><path d="M135.8 1000.3L132.6 998.8C131.2 998.3 130.6 997.2 131.6 996.2C133 995.4 134.6 996.6 136.2 997.2C138.2 998 140.6 998 142.6 997.2C144.2 996.6 145.8 995.4 147.2 996.2C148.2 997.2 147.6 998.3 146.2 998.8L143.3 1000.1V1003.8"/><path d="M139.9 1007.4L144.6 1012L152.5 1004.2" stroke-linecap="butt" stroke-linejoin="miter"/></g><g stroke="#b5b3b1" stroke-width="1.4"><rect x="1124.4" y="992.4" width="17.6" height="17.6"/><path d="M1130.3 992.4V1010M1136.2 992.4V1010M1124.4 998.3H1142M1124.4 1004.2H1142"/><rect x="1184.4" y="992.4" width="19.2" height="17.6"/><rect x="1188.4" y="995.6" width="11.2" height="11.4"/><path d="M1191 998.8H1197M1191 1001.4H1197M1191 1004H1197" stroke-width="1.1"/><path d="M1244.4 992.4H1263.6V1010H1244.4ZM1244.4 1002.8H1256.5V992.4M1250.2 992.4V1002.8"/></g><path d="M1292 1001.3H1303" stroke="#b5b3b1" stroke-width="1.3"/><path d="M1468 1001.6H1479.6M1473.8 996V1007.2" stroke="#b5b3b1" stroke-width="1.3"/><path d="M1312 1001.7H1460" stroke="#484644" stroke-width="1.7"/><path d="M1385.6 996.8V1006.4" stroke="#484644" stroke-width="1.8"/></svg>
<span class="t" style="left:11.80px;top:996.00px;font-size:14.8px;color:#4a4a4a;">Ready</span>
<span class="t" style="left:155.90px;top:996.00px;font-size:14.8px;color:#4a4a4a;transform:scaleX(1.0428);">Accessibility: Good to go</span>
<span class="t" style="left:353.10px;top:996.00px;font-size:14.8px;color:#4a4a4a;transform:scaleX(0.9907);">Page: 1 of 1</span>
<span class="t" style="left:1499.10px;top:996.00px;font-size:14.8px;color:#a9a7a5;transform:scaleX(1.0214);">100%</span>
<div class="a" style="left:0px;top:53px;width:2px;height:967px;background:#217346;"></div>
<div class="a" style="left:1566px;top:53px;width:2px;height:967px;background:#217346;"></div>
<div class="a" style="left:0px;top:1018px;width:1568px;height:2px;background:#217346;"></div>
</body></html>
